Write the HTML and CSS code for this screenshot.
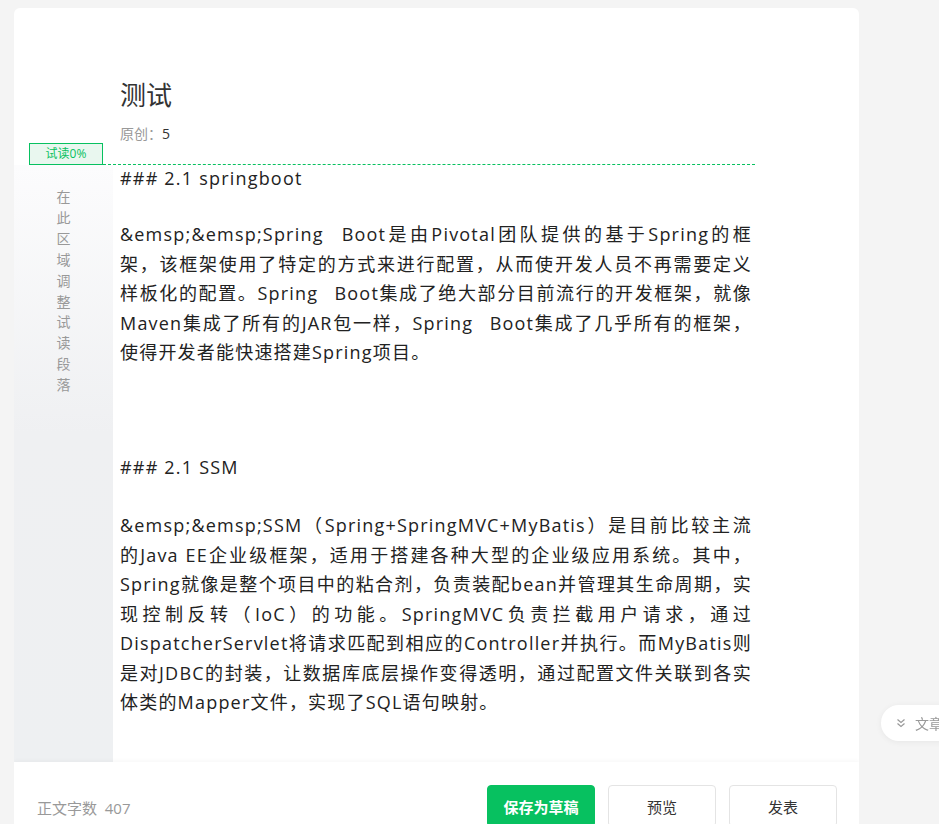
FILE: index.html
```html
<!DOCTYPE html>
<html lang="zh-CN">
<head>
    <meta charset="UTF-8">
    <meta name="viewport" content="width=device-width, initial-scale=1.0">
    <title>测试</title>
    <link rel="stylesheet" href="styles.css">
</head>
<body>
    <div class="card">
        <div class="head">
            <h1 class="title">测试</h1>
            <div class="meta">原创：<span class="meta-num">5</span></div>
        </div>

        <div class="divider">
            <span class="badge">试读0%</span>
            <span class="dash"></span>
        </div>

        <div class="editor">
            <div class="side">
                <span>在</span><span>此</span><span>区</span><span>域</span><span>调</span>
                <span>整</span><span>试</span><span>读</span><span>段</span><span>落</span>
            </div>
            <div class="content">
                <p class="line-h">### 2.1 springboot</p>
                <p class="blank"><br></p>
                <p class="p-wide">&amp;emsp;&amp;emsp;Spring Boot是由Pivotal团队提供的基于Spring的框架，该框架使用了特定的方式来进行配置，从而使开发人员不再需要定义样板化的配置。Spring Boot集成了绝大部分目前流行的开发框架，就像Maven集成了所有的JAR包一样，Spring Boot集成了几乎所有的框架，使得开发者能快速搭建Spring项目。</p>
                <p class="blank"><br></p>
                <p class="blank"><br></p>
                <p class="blank"><br></p>
                <p>### 2.1 SSM</p>
                <p class="blank"><br></p>
                <p>&amp;emsp;&amp;emsp;SSM（Spring+SpringMVC+MyBatis）是目前比较主流的Java EE企业级框架，适用于搭建各种大型的企业级应用系统。其中，Spring就像是整个项目中的粘合剂，负责装配bean并管理其生命周期，实现控制反转（IoC）的功能。SpringMVC负责拦截用户请求，通过DispatcherServlet将请求匹配到相应的Controller并执行。而MyBatis则是对JDBC的封装，让数据库底层操作变得透明，通过配置文件关联到各实体类的Mapper文件，实现了SQL语句映射。</p>
            </div>
        </div>

        <div class="footer">
            <div class="count">正文字数&nbsp;&nbsp;407</div>
            <div class="actions">
                <button class="btn btn-primary">保存为草稿</button>
                <button class="btn">预览</button>
                <button class="btn">发表</button>
            </div>
        </div>
    </div>

    <div class="toc-pill">
        <svg width="12" height="12" viewBox="0 0 12 12" fill="none" stroke="#999" stroke-width="1.2">
            <path d="M2.5 2.5 L6 5.5 L9.5 2.5"/>
            <path d="M2.5 6.5 L6 9.5 L9.5 6.5"/>
        </svg>
        <span>文章目录</span>
    </div>
</body>
</html>
```

FILE: styles.css
```css
body {
    margin: 0;
    background-color: #f4f4f4;
    font-family: "Open Sans", "Noto Sans CJK SC", sans-serif;
    color: #333;
    overflow: hidden;
    height: 824px;
}

.card {
    margin: 8px 0 0 14px;
    width: 845px;
    height: 826px;
    background-color: #fff;
    border-radius: 6px;
    display: flex;
    flex-direction: column;
    overflow: hidden;
}

.head {
    padding: 69px 0 0 106px;
}

.title {
    margin: 0;
    font-size: 26px;
    font-weight: normal;
    line-height: 36px;
    color: #333;
}

.meta {
    margin-top: 11px;
    font-size: 14px;
    line-height: 20px;
    color: #999;
}

.meta-num {
    color: #333;
}

.divider {
    display: flex;
    align-items: flex-end;
    width: 741px;
    margin-top: -1px;
}

.badge {
    margin-left: 15px;
    width: 72px;
    height: 20px;
    border: 1px solid #07c160;
    background-color: #e9f7ef;
    color: #07c160;
    font-size: 12px;
    line-height: 20px;
    text-align: center;
}

.dash {
    flex: 1;
    border-bottom: 1px dashed #07c160;
}

.editor {
    flex: 1;
    display: flex;
    min-height: 0;
}

.side {
    width: 99px;
    padding-top: 22px;
    background: linear-gradient(#fcfcfd, #eff0f2 45%, #eef0f2);
    display: flex;
    flex-direction: column;
    align-items: center;
    font-size: 14px;
    line-height: 20.9px;
    color: #999;
    box-sizing: border-box;
}

.content {
    margin-left: 7px;
    width: 632px;
    font-size: 18px;
    line-height: 29.5px;
    letter-spacing: 1.2px;
    color: #222;
    text-align: justify;
}

.content p {
    margin: 0;
}

.content .p-wide {
    word-spacing: 10px;
}

.content .line-h {
    line-height: 26.5px;
}

.content .blank {
    height: 28.5px;
}

.footer {
    height: 72px;
    flex-shrink: 0;
    box-sizing: border-box;
    padding: 23px 22px 0 23px;
    display: flex;
    justify-content: space-between;
    align-items: flex-start;
    box-shadow: 0 -1px 4px rgba(0, 0, 0, 0.04);
    position: relative;
}

.count {
    margin-top: 12px;
    font-size: 15px;
    line-height: 22px;
    color: #999;
}

.actions {
    display: flex;
    gap: 13px;
}

.btn {
    width: 108px;
    height: 42px;
    border: 1px solid #e4e4e4;
    border-radius: 4px;
    background-color: #fff;
    color: #333;
    font-family: "Noto Sans CJK SC", sans-serif;
    font-size: 15px;
    cursor: pointer;
}

.btn-primary {
    border-color: #07c160;
    background-color: #07c160;
    color: #fff;
    font-weight: bold;
}

.toc-pill {
    position: fixed;
    left: 881px;
    top: 705px;
    height: 36px;
    padding: 0 16px 0 14px;
    display: flex;
    align-items: center;
    gap: 8px;
    background-color: #fff;
    border-radius: 18px;
    box-shadow: 0 1px 6px rgba(0, 0, 0, 0.06);
    font-family: "Noto Sans CJK SC", sans-serif;
    font-size: 14px;
    color: #999;
    white-space: nowrap;
}
```
